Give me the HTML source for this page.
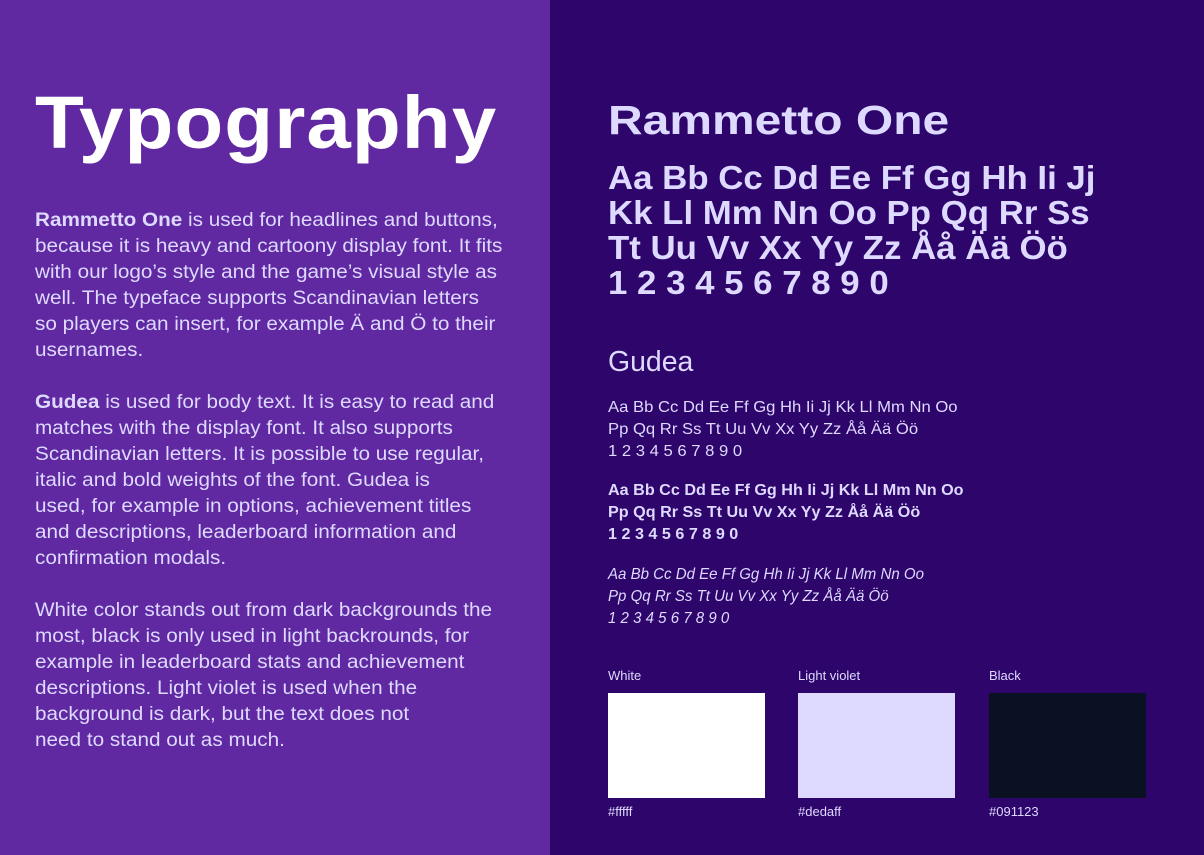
<!DOCTYPE html>
<html><head><meta charset="utf-8"><style>
*{margin:0;padding:0;box-sizing:border-box}
body{width:1204px;height:855px;overflow:hidden;font-family:"Liberation Sans",sans-serif;position:relative}
.l{position:absolute;left:0;top:0;width:550px;height:855px;background:#6029a1}
.r{position:absolute;left:550px;top:0;width:654px;height:855px;background:#2e056b}
.a{position:absolute;white-space:nowrap;transform-origin:left top}
h1{position:absolute;left:35px;top:80px;font-size:74px;font-weight:bold;color:#fff;white-space:nowrap;transform:scaleX(1.08);transform-origin:left top;letter-spacing:1px}
.body{position:absolute;left:35px;top:208px;color:#dedaff;font-size:19px;line-height:26px;transform:scaleX(1.09);transform-origin:left top;white-space:nowrap}
.disp{font-weight:bold;color:#dedaff}
.sm{color:#dedaff;font-size:16px;line-height:22px}
.lab{position:absolute;color:#dedaff;font-size:13px}
.sw{position:absolute;top:693px;width:157px;height:105px}
</style></head><body>
<div class="l"></div><div class="r"></div>
<h1>Typography</h1>
<div class="body">
<b>Rammetto One</b> is used for headlines and buttons,<br>
because it is heavy and cartoony display font. It fits<br>
with our logo’s style and the game’s visual style as<br>
well. The typeface supports Scandinavian letters<br>
so players can insert, for example Ä and Ö to their<br>
usernames.<br><br>
<b>Gudea</b> is used for body text. It is easy to read and<br>
matches with the display font. It also supports<br>
Scandinavian letters. It is possible to use regular,<br>
italic and bold weights of the font. Gudea is<br>
used, for example in options, achievement titles<br>
and descriptions, leaderboard information and<br>
confirmation modals.<br><br>
White color stands out from dark backgrounds the<br>
most, black is only used in light backrounds, for<br>
example in leaderboard stats and achievement<br>
descriptions. Light violet is used when the<br>
background is dark, but the text does not<br>
need to stand out as much.
</div>
<div class="a disp" style="left:608px;top:97px;font-size:41px;transform:scaleX(1.17)">Rammetto One</div>
<div class="a disp" style="left:608px;top:160px;font-size:33px;line-height:35px;transform:scaleX(1.055)">Aa Bb Cc Dd Ee Ff Gg Hh Ii Jj<br>Kk Ll Mm Nn Oo Pp Qq Rr Ss<br>Tt Uu Vv Xx Yy Zz Åå Ää Öö<br>1 2 3 4 5 6 7 8 9 0</div>
<div class="a" style="left:608px;top:346px;font-size:29px;color:#dedaff;transform:scaleX(0.98)">Gudea</div>
<div class="a sm" style="left:608px;top:397px;transform:scaleX(1.04)">Aa Bb Cc Dd Ee Ff Gg Hh Ii Jj Kk Ll Mm Nn Oo<br>Pp Qq Rr Ss Tt Uu Vv Xx Yy Zz Åå Ää Öö<br>1 2 3 4 5 6 7 8 9 0</div>
<div class="a sm" style="left:608px;top:480px;font-weight:bold;transform:scaleX(1.01)">Aa Bb Cc Dd Ee Ff Gg Hh Ii Jj Kk Ll Mm Nn Oo<br>Pp Qq Rr Ss Tt Uu Vv Xx Yy Zz Åå Ää Öö<br>1 2 3 4 5 6 7 8 9 0</div>
<div class="a sm" style="left:608px;top:564px;font-style:italic;transform:scaleX(0.94)">Aa Bb Cc Dd Ee Ff Gg Hh Ii Jj Kk Ll Mm Nn Oo<br>Pp Qq Rr Ss Tt Uu Vv Xx Yy Zz Åå Ää Öö<br>1 2 3 4 5 6 7 8 9 0</div>
<div class="lab" style="left:608px;top:668px">White</div>
<div class="lab" style="left:798px;top:668px">Light violet</div>
<div class="lab" style="left:989px;top:668px">Black</div>
<div class="sw" style="left:608px;background:#fff"></div>
<div class="sw" style="left:798px;background:#dedaff"></div>
<div class="sw" style="left:989px;background:#091123"></div>
<div class="lab" style="left:608px;top:804px">#fffff</div>
<div class="lab" style="left:798px;top:804px">#dedaff</div>
<div class="lab" style="left:989px;top:804px">#091123</div>
</body></html>
